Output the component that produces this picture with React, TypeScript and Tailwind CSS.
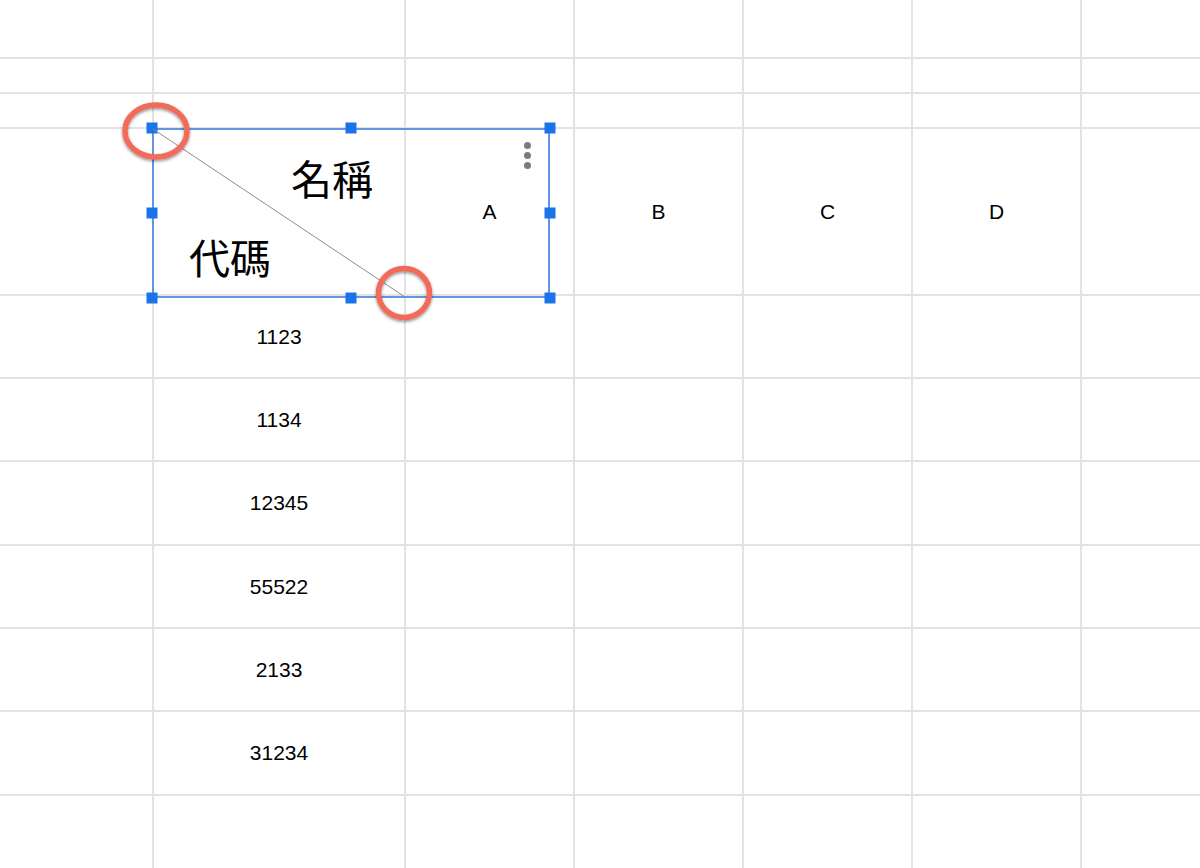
import React from "react";

// ─── sheet grid with a diagonal-header drawing on top ───────────────────────

const COLS = 7;
const ROWS = 11;

const headers: Record<number, string> = { 2: "A", 3: "B", 4: "C", 5: "D" };
const codes = ["1123", "1134", "12345", "55522", "2133", "31234"];

function cellText(r: number, c: number): string {
  if (r === 3 && headers[c]) return headers[c];
  if (c === 1 && r >= 4 && r < 4 + codes.length) return codes[r - 4];
  return "";
}

// handle spots, as fractions of the frame
const handles: [string, string][] = [
  ["0%", "0%"],
  ["50%", "0%"],
  ["100%", "0%"],
  ["0%", "50%"],
  ["100%", "50%"],
  ["0%", "100%"],
  ["50%", "100%"],
  ["100%", "100%"],
];

const cjk = "text-[41px] leading-[48px] text-black [font-family:'Noto_Sans_CJK_TC','Noto_Sans_CJK_SC',sans-serif]";

function Drawing() {
  return (
    <div className="pointer-events-none absolute left-[152px] top-[128px] flex h-[170px] w-[398px] flex-col items-start border-2 border-[#5f95e2]">
      <span className={`${cjk} ml-[137px] mt-[23px]`}>名稱</span>
      <span className={`${cjk} ml-[35px] mt-[31px]`}>代碼</span>

      {/* kebab */}
      <div className="absolute right-[17px] top-[12px] flex flex-col gap-[3px]">
        <span className="h-[7px] w-[7px] rounded-full bg-[#7b7b7b]" />
        <span className="h-[7px] w-[7px] rounded-full bg-[#7b7b7b]" />
        <span className="h-[7px] w-[7px] rounded-full bg-[#7b7b7b]" />
      </div>

      <div className="absolute -inset-[2px]">
        {handles.map(([x, y], i) => (
          <div
            key={i}
            className="absolute h-[11px] w-[11px] -translate-x-1/2 -translate-y-1/2 bg-[#1a73e8]"
            style={{ left: x, top: y }}
          />
        ))}
      </div>
    </div>
  );
}

function Marks() {
  return (
    <svg className="pointer-events-none absolute inset-0" width="1200" height="868">
      <defs>
        <filter id="sh" x="-30%" y="-30%" width="160%" height="160%">
          <feDropShadow dx="0" dy="1.5" stdDeviation="1.5" floodColor="#000" floodOpacity="0.45" />
        </filter>
      </defs>
      <line x1="153" y1="129" x2="405" y2="297" stroke="#8a8a8a" strokeWidth="1" />
      <g filter="url(#sh)" fill="none" stroke="#f26a5a" strokeWidth="5.5">
        <ellipse cx="156" cy="131" rx="31" ry="26" />
        <ellipse cx="404" cy="293" rx="25.5" ry="24.5" />
      </g>
    </svg>
  );
}

export default function App() {
  const cells = [];
  for (let r = 0; r < ROWS; r++) {
    for (let c = 0; c < COLS; c++) {
      cells.push(
        <div key={`${r}-${c}`} className="flex items-center justify-center bg-white text-[21px] text-black">
          {cellText(r, c)}
        </div>
      );
    }
  }

  return (
    <div className="relative h-[868px] w-[1200px] overflow-hidden bg-white [font-family:'Liberation_Sans',Arial,sans-serif]">
      <div className="grid h-full grid-cols-[152px_250px_167px_167px_167px_167px_1fr] grid-rows-[57px_33px_33px_165px_81px_81px_82px_81px_81px_82px_1fr] gap-[2px] bg-[#e2e2e2]">
        {cells}
      </div>
      <Drawing />
      <Marks />
    </div>
  );
}
